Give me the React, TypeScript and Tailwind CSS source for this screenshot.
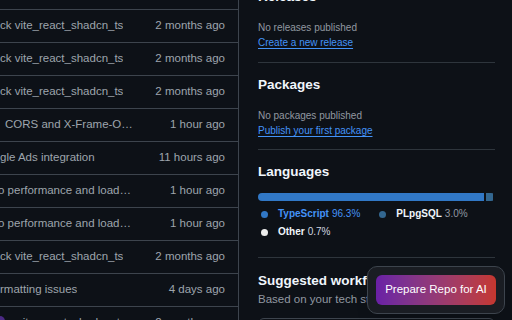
import React from 'react';

type Commit = {
  message: string;
  time: string;
  indent?: string;
  avatar?: boolean;
};

const commits: Commit[] = [
  { message: 'ck vite_react_shadcn_ts', time: '2 months ago' },
  { message: 'ck vite_react_shadcn_ts', time: '2 months ago' },
  { message: 'ck vite_react_shadcn_ts', time: '2 months ago' },
  { message: 'ck vite_react_shadcn_ts', time: '2 months ago' },
  { message: 'CORS and X-Frame-Options headers', time: '1 hour ago', indent: 'ml-[5px] max-w-[131px]' },
  { message: 'gle Ads integration', time: '11 hours ago' },
  { message: 'o performance and loading states', time: '1 hour ago', indent: '-ml-[2px] max-w-[134px]' },
  { message: 'o performance and loading states', time: '1 hour ago', indent: '-ml-[2px] max-w-[134px]' },
  { message: 'ck vite_react_shadcn_ts', time: '2 months ago' },
  { message: 'rmatting issues', time: '4 days ago' },
  { message: 'vite_react_shadcn_ts', time: '2 months ago', avatar: true },
];

const CommitRow: React.FC<{ commit: Commit }> = ({ commit }) => (
  <div className="flex h-[33px] shrink-0 items-center justify-between border-b border-[#3d444d] pr-[13px] text-[11.5px] text-[#9ea5ad]">
    <div className="flex min-w-0 items-center">
      {commit.avatar && <span className="h-[14px] w-[5px] shrink-0 rounded-r-full bg-[#4b2a84]" />}
      <span className={`block truncate whitespace-nowrap ${commit.avatar ? 'pl-[12px]' : ''} ${commit.indent ?? 'max-w-[131px]'}`}>
        {commit.message}
      </span>
    </div>
    <span className="whitespace-nowrap">{commit.time}</span>
  </div>
);

const Heading: React.FC<{ children: React.ReactNode }> = ({ children }) => (
  <h2 className="text-[13.5px] font-semibold leading-5 text-[#f0f6fc]">{children}</h2>
);

const EmptyNote: React.FC<{ text: string; link: string }> = ({ text, link }) => (
  <div className="mt-[13px] text-[10px] leading-[15px]">
    <div className="text-[#9198a1]">{text}</div>
    <a href="#" className="text-[#4493f8] underline decoration-[#4493f8] underline-offset-2">
      {link}
    </a>
  </div>
);

export default function App() {
  return (
    <div
      className="relative flex h-[320px] w-[512px] overflow-hidden bg-[#0d1117]"
      style={{ fontFamily: '"Liberation Sans", Arial, sans-serif' }}
    >
      <div className="-mt-[23px] flex w-[239px] shrink-0 flex-col border-r border-[#3d444d]">
        {commits.map((c, i) => (
          <CommitRow key={i} commit={c} />
        ))}
      </div>

      <aside className="ml-[19px] flex w-[237px] shrink-0 flex-col">
        <section className="-mt-[13px] border-b border-[#3d444db3] pb-[12px]">
          <Heading>Releases</Heading>
          <EmptyNote text="No releases published" link="Create a new release" />
        </section>

        <section className="border-b border-[#3d444db3] pb-[11px] pt-[12px]">
          <Heading>Packages</Heading>
          <EmptyNote text="No packages published" link="Publish your first package" />
        </section>

        <section className="border-b border-[#3d444db3] pb-[18px] pt-[12px]">
          <Heading>Languages</Heading>
          <div className="mt-[11px] flex h-2 gap-[2px] overflow-hidden rounded-full">
            <span className="h-full bg-[#3178c6]" style={{ width: '96.3%' }} />
            <span className="h-full bg-[#336790]" style={{ width: '3%' }} />
            <span className="h-full grow bg-[#ededed]" />
          </div>
          <div className="mt-[6px] flex flex-col gap-[4px] pl-[3px] text-[10px] leading-[14px]">
            <div className="flex items-center gap-[19px]">
              <div className="flex items-center">
                <span className="h-[7px] w-[7px] rounded-full bg-[#3178c6]" />
                <span className="ml-[10px] font-semibold text-[#4493f8]">TypeScript</span>
                <span className="ml-[3px] text-[#4493f8]">96.3%</span>
              </div>
              <div className="flex items-center">
                <span className="h-[7px] w-[7px] rounded-full bg-[#336790]" />
                <span className="ml-[10px] font-semibold text-[#f0f6fc]">PLpgSQL</span>
                <span className="ml-[3px] text-[#9198a1]">3.0%</span>
              </div>
            </div>
            <div className="flex items-center">
              <span className="h-[7px] w-[7px] rounded-full bg-[#ededed]" />
              <span className="ml-[10px] font-semibold text-[#f0f6fc]">Other</span>
              <span className="ml-[3px] text-[#d1d7e0]">0.7%</span>
            </div>
          </div>
        </section>

        <section className="pt-[13px]">
          <Heading>Suggested workflows</Heading>
          <p className="text-[11.5px] leading-4 text-[#9198a1]">Based on your tech stack</p>
          <div className="mt-[11px] h-[60px] rounded-md border border-[#3d444d]" />
        </section>
      </aside>

      <div className="fixed bottom-[6px] right-[7px] w-[138px] rounded-[10px] border border-[#3d444d] bg-[#1a1d23] p-[8px] shadow-lg">
        <button className="h-[30px] w-full rounded-[6px] bg-linear-to-r from-[#6a1fa6] to-[#c5372e] text-[11.5px] font-medium text-white">
          Prepare Repo for AI
        </button>
      </div>
    </div>
  );
}
